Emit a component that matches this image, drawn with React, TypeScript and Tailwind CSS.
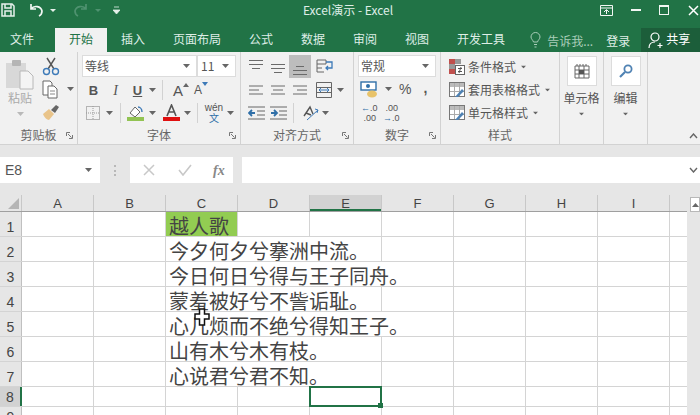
import type { ReactNode } from 'react'

const cjk = "font-['Noto_Sans_CJK_SC','Liberation_Sans',sans-serif]"
const cols = ['A', 'B', 'C', 'D', 'E', 'F', 'G', 'H', 'I', '']
// spans = how many gridlines the overflowing text in column C hides
const rows = [
  { text: '越人歌', spans: 0 },
  { text: '今夕何夕兮搴洲中流。', spans: 2 },
  { text: '今日何日兮得与王子同舟。', spans: 3 },
  { text: '蒙羞被好兮不訾诟耻。', spans: 2 },
  { text: '心几烦而不绝兮得知王子。', spans: 3 },
  { text: '山有木兮木有枝。', spans: 2 },
  { text: '心说君兮君不知。', spans: 2 },
  { text: '', spans: 0 },
  { text: '', spans: 0 },
]

function Caret({ className = '' }: { className?: string }) {
  return (
    <svg width="7" height="4" viewBox="0 0 7 4" className={`shrink-0 ${className}`}>
      <path d="M0 0h7L3.500 4z" fill="#666" />
    </svg>
  )
}

function Launcher({ className = '' }: { className?: string }) {
  return (
    <svg width="7" height="7" viewBox="0 0 7 7" className={`shrink-0 ${className}`}>
      <path d="M.5 4V.5H4M6.500 3v3.500H3M2 2l3.500 3.500" stroke="#777" fill="none" />
    </svg>
  )
}

function Lines({ kind }: { kind: 'left' | 'center' | 'right' | 'top' | 'mid' | 'bottom' }) {
  const paths: Record<string, string> = {
    left: 'M3 6h14M3 10h10M3 14h14',
    center: 'M3 6h14M5 10h10M3 14h14',
    right: 'M3 6h14M7 10h10M3 14h14',
    top: 'M3 3.500h14M3 7.500h14M6 11.500h8',
    mid: 'M3 7.500h14M3 11.500h14M6 15.500h8',
    bottom: 'M6 9.500h8M3 13.500h14M3 17.500h14',
  }
  return (
    <svg width="20" height="20" viewBox="0 0 20 20">
      <path d={paths[kind]} stroke="#6a6a6a" fill="none" />
    </svg>
  )
}

function Combo({ text, className }: { text: string; className: string }) {
  return (
    <div className={`flex h-[22px] items-center justify-between border border-[#dcdcdc] bg-white pl-0.5 pr-1.5 text-[12px] text-[#555] ${className}`}>
      <span>{text}</span>
      <Caret />
    </div>
  )
}

function Group({ width, label, launcher = true, children }: { width: number; label: string; launcher?: boolean; children: ReactNode }) {
  return (
    <div style={{ width }} className="flex h-full shrink-0 flex-col border-r border-[#d2d2d2]">
      <div className="h-[73px] min-h-0">{children}</div>
      <div className="relative flex h-[20px] items-center justify-center pt-[1px] text-[12px] text-[#666]">
        {label}
        {launcher && <Launcher className="absolute right-1 top-[8px]" />}
      </div>
    </div>
  )
}

function Clipboard() {
  return (
    <Group width={78} label="剪贴板">
      <div className="flex h-full">
        <div className="ml-[5px] flex w-[30px] flex-col items-center pt-[7px] text-[12px] leading-[14px] text-[#aaa]">
          <svg width="30" height="31" viewBox="0 0 30 31">
            <rect x="1" y="4" width="20" height="25" fill="#d8d8d8" />
            <rect x="7" y="1" width="9" height="6" rx="1" fill="#b5b5b5" />
            <path d="M15 12h8l5 5v13H15z" fill="#f4f4f4" stroke="#b8b8b8" />
          </svg>
          <span className="mt-[1px]">粘贴</span>
          <Caret className="mt-[7px] opacity-40" />
        </div>
        <div className="ml-[6px] flex flex-col gap-[3px] pt-[4px]">
          <svg width="20" height="20" viewBox="0 0 20 20">
            <path d="M6 2l7 11M14 2L7 13" stroke="#555" strokeWidth="1.400" fill="none" />
            <circle cx="5.500" cy="15.500" r="3" stroke="#3d7ab8" strokeWidth="1.400" fill="none" />
            <circle cx="14.500" cy="15.500" r="3" stroke="#3d7ab8" strokeWidth="1.400" fill="none" />
          </svg>
          <div className="flex items-center gap-[7px]">
            <svg width="19" height="20" viewBox="0 0 19 20">
              <path d="M2 2h7l2 2v12H2z" fill="#fff" stroke="#666" />
              <path d="M7 7h6l3 3v9H7z" fill="#fff" stroke="#666" />
              <path d="M9 12h5M9 15h5" stroke="#888" />
            </svg>
            <Caret />
          </div>
          <svg width="20" height="20" viewBox="0 0 20 20">
            <path d="M2 12l6-5 5 5-5 6c-2 0-5-3-6-6z" fill="#e9c48a" />
            <path d="M10 8l5-5 3 2-4 6z" fill="#666" />
          </svg>
        </div>
      </div>
    </Group>
  )
}

function Sep() {
  return <div className="h-[20px] w-px bg-[#d2d2d2]" />
}

function Font() {
  return (
    <Group width={163} label="字体">
      <div className="flex h-full flex-col pl-[4px]">
        <div className="mt-[3px] flex">
          <Combo text="等线" className="w-[115px]" />
          <Combo text="11" className="w-[39px] !pl-[3px]" />
        </div>
        <div className="mt-[2px] flex h-[23px] items-center text-[#555]">
          <span className="ml-[4px] w-[15px] text-center font-['Liberation_Sans'] text-[13px] font-bold">B</span>
          <span className="ml-[7px] w-[15px] text-center font-['Liberation_Serif'] text-[14px] italic">I</span>
          <span className="ml-[7px] w-[15px] text-center font-['Liberation_Sans'] text-[13px] font-bold underline">U</span>
          <Caret className="ml-[4px]" />
          <div className="ml-[6px]"><Sep /></div>
          <span className="ml-[10px] font-['Liberation_Sans'] text-[15px] leading-none">A</span>
          <svg width="6" height="4" viewBox="0 0 6 4" className="mb-[10px]"><path d="M0 4l3-4 3 4z" fill="#666" /></svg>
          <span className="ml-[5px] font-['Liberation_Sans'] text-[12px] leading-none">A</span>
          <svg width="6" height="4" viewBox="0 0 6 4" className="mb-[12px]"><path d="M0 0l3 4 3-4z" fill="#3d7ab8" /></svg>
        </div>
        <div className="flex h-[23px] items-center">
          <svg width="14" height="14" viewBox="0 0 14 14" className="ml-[4px]">
            <rect x=".5" y=".5" width="13" height="13" fill="none" stroke="#777" strokeDasharray="1 1" />
            <path d="M7 0v14M0 7h14" stroke="#999" strokeDasharray="1 1" />
          </svg>
          <Caret className="ml-[6px]" />
          <div className="ml-[7px]"><Sep /></div>
          <svg width="17" height="17" viewBox="0 0 17 17" className="ml-[6px]">
            <path d="M3 9l5-6 5 5-5 5z" fill="#fff" stroke="#666" />
            <path d="M11 3c2 0 4 2 4 5" stroke="#3d7ab8" strokeWidth="1.400" fill="none" />
            <rect y="13" width="17" height="4" fill="#92c353" />
          </svg>
          <Caret className="ml-[5px]" />
          <svg width="17" height="17" viewBox="0 0 17 17" className="ml-[7px]">
            <path d="M4 12L8.500 1 13 12M6 8h5" stroke="#555" strokeWidth="1.600" fill="none" />
            <rect y="13" width="17" height="4" fill="#e01010" />
          </svg>
          <Caret className="ml-[4px]" />
          <div className="ml-[6px]"><Sep /></div>
          <div className="ml-[6px] flex w-[20px] flex-col items-center text-[10px] leading-[10px] text-[#555]">
            <span className="font-['Liberation_Sans']">wén</span>
            <span className="text-[#2f6fa8]">文</span>
          </div>
          <Caret className="ml-[3px]" />
        </div>
      </div>
    </Group>
  )
}

function Align() {
  return (
    <Group width={113} label="对齐方式">
      <div className="flex h-full flex-col pl-[4px]">
        <div className="mt-[3px] flex h-[23px] items-center">
          <div className="flex w-[22px] justify-center"><Lines kind="top" /></div>
          <div className="flex w-[22px] justify-center"><Lines kind="mid" /></div>
          <div className="flex h-[23px] w-[22px] items-center justify-center bg-[#bdbdbd]"><Lines kind="bottom" /></div>
          <svg width="18" height="18" viewBox="0 0 18 18" className="ml-[5px]">
            <path d="M1 2h9v4H1zM1 6v4h5M1 10v4h7" stroke="#666" fill="none" />
            <path d="M10 4h6v6h-6M12 8l-2 2 2 2" stroke="#3d7ab8" strokeWidth="1.300" fill="none" />
          </svg>
        </div>
        <div className="flex h-[24px] items-center">
          <div className="flex w-[22px] justify-center"><Lines kind="left" /></div>
          <div className="flex w-[22px] justify-center"><Lines kind="center" /></div>
          <div className="flex w-[22px] justify-center"><Lines kind="right" /></div>
          <svg width="16" height="16" viewBox="0 0 16 16" className="ml-[5px]">
            <path d="M.5.5h15v15H.5zM.5 5.500h15M.5 10.500h15" stroke="#666" fill="none" />
            <path d="M3 8h10M5 6L3 8l2 2M11 6l2 2-2 2" stroke="#3d7ab8" fill="none" />
          </svg>
          <Caret className="ml-[5px]" />
        </div>
        <div className="flex h-[23px] items-center">
          <svg width="17" height="16" viewBox="0 0 17 16" className="ml-[3px]">
            <path d="M0 2h17M9 6h8M9 10h8M0 14h17" stroke="#666" fill="none" />
            <path d="M7 8H2M4 5L1 8l3 3" stroke="#2f6fa8" strokeWidth="1.800" fill="none" />
          </svg>
          <svg width="17" height="16" viewBox="0 0 17 16" className="ml-[5px]">
            <path d="M0 2h17M9 6h8M9 10h8M0 14h17" stroke="#666" fill="none" />
            <path d="M1 8h5M4 5l3 3-3 3" stroke="#2f6fa8" strokeWidth="1.800" fill="none" />
          </svg>
          <div className="ml-[6px]"><Sep /></div>
          <svg width="18" height="18" viewBox="0 0 18 18" className="ml-[8px]">
            <path d="M2 12L8 3l3 7M4 9l5 2" stroke="#555" strokeWidth="1.400" fill="none" />
            <path d="M5 16L16 6M13 5l3 1-1 3" stroke="#3d7ab8" fill="none" />
          </svg>
          <Caret className="ml-[2px]" />
        </div>
      </div>
    </Group>
  )
}

function NumberGroup() {
  return (
    <Group width={87} label="数字">
      <div className="flex h-full flex-col pl-[4px]">
        <div className="mt-[3px]"><Combo text="常规" className="w-[78px]" /></div>
        <div className="flex h-[24px] items-center text-[#555]">
          <svg width="20" height="20" viewBox="0 0 20 20" className="ml-[2px]">
            <rect x="1" y="3" width="15" height="8" fill="#fff" stroke="#2f6fa8" strokeWidth="1.400" />
            <circle cx="8" cy="7" r="2" fill="#2f6fa8" />
            <ellipse cx="12" cy="15" rx="5" ry="3.500" fill="#e8c36a" />
          </svg>
          <Caret className="ml-[5px]" />
          <span className="ml-[7px] font-['Liberation_Sans'] text-[14px] leading-none">%</span>
          <span className="mb-[3px] ml-[12px] font-['Liberation_Sans'] text-[14px] font-bold leading-none">,</span>
        </div>
        <div className="flex h-[23px] items-center font-['Liberation_Sans'] text-[9px] leading-[10px] text-[#555]">
          <div className="ml-[3px] w-[15px] whitespace-nowrap text-right"><span className="text-[#2f6fa8]">←</span>.0<br />.00</div>
          <div className="ml-[7px] w-[15px] whitespace-nowrap text-right">.00<br /><span className="text-[#2f6fa8]">→</span>.0</div>
        </div>
      </div>
    </Group>
  )
}

function StyleRow({ text, cond }: { text: string; cond?: boolean }) {
  return (
    <div className="flex h-[23px] items-center text-[12px] text-[#555]">
      {cond ? (
        <svg width="16" height="16" viewBox="0 0 16 16" className="mr-[3px]">
          <rect x="0" y="0" width="6" height="5" fill="#c0504d" />
          <rect x="6" y="0" width="6" height="5" fill="#999" />
          <rect x="0" y="5" width="6" height="5" fill="#999" />
          <rect x="0" y="10" width="6" height="5" fill="#c0504d" />
          <rect x="6.500" y="6.500" width="9" height="9" fill="#fff" stroke="#666" />
          <path d="M9 9.500h4M9 12.500h4M12 8l-2 6" stroke="#555" fill="none" />
        </svg>
      ) : (
        <svg width="16" height="16" viewBox="0 0 16 16" className="mr-[3px]">
          <rect x=".5" y=".5" width="15" height="14" fill="#fff" stroke="#777" />
          <rect x="1" y="1" width="14" height="4" fill="#bbb" />
          <path d="M1 9.500h14M5.500 1v13M10.500 1v13" stroke="#aaa" />
          <path d="M6 15l7-8 2 2-6 6z" fill="#4f82b3" />
        </svg>
      )}
      <span>{text}</span>
      <Caret className="ml-[4px] scale-75" />
    </div>
  )
}

function Styles() {
  return (
    <Group width={119} label="样式" launcher={false}>
      <div className="flex h-full flex-col pl-[8px] pt-[3px]">
        <StyleRow text="条件格式" cond />
        <StyleRow text="套用表格格式" />
        <StyleRow text="单元格样式" />
      </div>
    </Group>
  )
}

function BigButton({ label, width, children }: { label: string; width: number; children: ReactNode }) {
  return (
    <Group width={width} label="" launcher={false}>
      <div className="flex h-full flex-col items-center pt-[4px] text-[12px] leading-[16px] text-[#555]">
        <div className="flex h-[30px] w-[30px] items-center justify-center border border-[#dcdcdc] bg-white">{children}</div>
        <span className="mt-[4px]">{label}</span>
        <Caret className="mt-[6px] scale-75" />
      </div>
    </Group>
  )
}

function Ribbon() {
  return (
    <div className={`relative flex h-[93px] border-b border-[#d2d2d2] bg-[#f1f1f1] ${cjk}`}>
      <Clipboard />
      <Font />
      <Align />
      <NumberGroup />
      <Styles />
      <BigButton label="单元格" width={44}>
        <svg width="16" height="16" viewBox="0 0 16 16">
          <path d="M1 3h14v12H1zM1 7h14M1 11h14M5 3v12M10 3v12M3 1v2M6 1v2M9 1v2M12 1v2" stroke="#666" fill="none" />
          <rect x="5" y="7" width="5" height="4" fill="#555" />
        </svg>
      </BigButton>
      <BigButton label="编辑" width={44}>
        <svg width="16" height="16" viewBox="0 0 16 16">
          <circle cx="10" cy="6" r="3.600" stroke="#4f82b3" strokeWidth="1.800" fill="none" />
          <path d="M7 9l-5 5" stroke="#4f82b3" strokeWidth="2.200" />
        </svg>
      </BigButton>
      <svg width="9" height="6" viewBox="0 0 9 6" className="absolute bottom-[5px] right-[2px]">
        <path d="M1 5l3.500-4L8 5" stroke="#666" strokeWidth="1.400" fill="none" />
      </svg>
    </div>
  )
}

function TitleBar() {
  return (
    <div className="flex h-[26px] items-center bg-[#217346] pb-[6px] text-[#dfeee6]">
      <svg width="14" height="14" viewBox="0 0 14 14" className="ml-[1px]">
        <path d="M1 1h10l2 2v10H1z" fill="none" stroke="#e6f1eb" strokeWidth="1.500" />
        <path d="M4 1v4h6V1M4 13V8h6v5" fill="none" stroke="#e6f1eb" strokeWidth="1.500" />
      </svg>
      <svg width="16" height="14" viewBox="0 0 16 14" className="ml-[14px]">
        <path d="M2 1v5h5M2 6c3-4 10-3 11 2 0 2-1 4-3 5" fill="none" stroke="#f2f7f4" strokeWidth="1.700" />
      </svg>
      <svg width="6" height="3" viewBox="0 0 6 3" className="ml-[5px]"><path d="M0 0h6L3 3z" fill="#e6f1eb" /></svg>
      <svg width="16" height="14" viewBox="0 0 16 14" className="ml-[16px]">
        <path d="M14 1v5H9M14 6C11 2 4 3 3 8c0 2 1 4 3 5" fill="none" stroke="#4f9270" strokeWidth="1.700" />
      </svg>
      <svg width="6" height="3" viewBox="0 0 6 3" className="ml-[7px]"><path d="M0 0h6L3 3z" fill="#4f9270" /></svg>
      <svg width="7" height="8" viewBox="0 0 7 8" className="ml-[12px]"><path d="M1 1h5M0 4h7L3.500 8z" fill="#e6f1eb" stroke="#e6f1eb" strokeWidth=".8" /></svg>
      <div className={`flex-1 pr-[24px] text-center text-[12px] ${cjk}`}>Excel演示 - Excel</div>
      <svg width="13" height="11" viewBox="0 0 13 11" className="mr-[18px]">
        <path d="M.5.5h12v10H.5zM.5 3h12M4 7l2.500-2.500L9 7M6.500 5v4" fill="none" stroke="#f2f7f4" />
      </svg>
      <div className="mr-[18px] h-[2px] w-[10px] bg-[#f2f7f4]" />
      <div className="mr-[19px] h-[10px] w-[10px] border border-t-2 border-[#f2f7f4]" />
      <svg width="11" height="11" viewBox="0 0 11 11" className="mr-[1px]">
        <path d="M1 1l9 9M10 1l-9 9" stroke="#fff" strokeWidth="1.500" />
      </svg>
    </div>
  )
}

function TabBar() {
  const tabs = ['开始', '插入', '页面布局', '公式', '数据', '审阅', '视图', '开发工具']
  return (
    <div className={`flex h-[26px] items-end bg-[#217346] text-[12px] leading-[22px] text-[#dfeee6] ${cjk}`}>
      <div className="h-[24px] w-[55px] pl-[10px]">文件</div>
      {tabs.map((tab, i) => (
        <div key={tab} className={`h-[24px] px-[14px] ${i === 0 ? 'bg-[#f1f1f1] text-[#217346]' : ''}`}>
          {tab}
        </div>
      ))}
      <svg width="11" height="16" viewBox="0 0 11 16" className="mb-[4px] ml-[11px]">
        <path d="M3.500 10C3 8 1 7 1 5a4.500 4.500 0 019 0c0 2-2 3-2.500 5zM4 12.500h3M4.500 15h2" fill="none" stroke="#a9cdb9" />
      </svg>
      <div className="ml-[6px] w-[58px] text-[#a9cdb9]">告诉我...</div>
      <div className="ml-[1px] w-[34px]">登录</div>
      <div className="ml-[1px] flex h-[24px] flex-1 items-center bg-[#1c5e3a] pl-[7px] text-white">
        <svg width="17" height="17" viewBox="0 0 17 17" className="mr-[1px]">
          <circle cx="7" cy="5" r="4" fill="none" stroke="#fff" strokeWidth="1.200" />
          <path d="M1 16c0-4 2-6 6-6M12 11v5M9.500 13.500h5" fill="none" stroke="#fff" strokeWidth="1.200" />
        </svg>
        <span className="-mt-[2px]">共享</span>
      </div>
    </div>
  )
}

function FormulaBar() {
  return (
    <div className="flex h-[50px] items-start bg-[#e6e6e6] pt-[12px]">
      <div className="flex h-[26px] w-[100px] items-center justify-between bg-white pl-[5px] pr-[8px] font-['Liberation_Sans'] text-[14px] text-[#555]">
        E8
        <Caret />
      </div>
      <div className="ml-[14px] mt-[8px] flex h-[11px] w-[2px] flex-col justify-between">
        <div className="h-[2px] bg-[#b8b8b8]" />
        <div className="h-[2px] bg-[#b8b8b8]" />
        <div className="h-[2px] bg-[#b8b8b8]" />
      </div>
      <div className="ml-[14px] flex h-[26px] w-[103px] items-center bg-white">
        <svg width="12" height="12" viewBox="0 0 12 12" className="ml-[13px]">
          <path d="M1 1l10 10M11 1L1 11" stroke="#c8c8c8" strokeWidth="1.500" />
        </svg>
        <svg width="14" height="12" viewBox="0 0 14 12" className="ml-[23px]">
          <path d="M1 6l4 5 8-10" stroke="#c8c8c8" strokeWidth="1.600" fill="none" />
        </svg>
        <span className="ml-[21px] font-['Liberation_Serif'] text-[14px] font-bold italic text-[#888]">fx</span>
      </div>
      <div className="ml-[9px] flex h-[26px] flex-1 items-center justify-end bg-white pr-[2px]">
        <svg width="9" height="6" viewBox="0 0 9 6">
          <path d="M1 1l3.500 4L8 1" stroke="#666" strokeWidth="1.400" fill="none" />
        </svg>
      </div>
    </div>
  )
}

function Sheet() {
  return (
    <div className="flex h-[220px] overflow-hidden bg-[#e6e6e6]">
      <div className="w-[687px] shrink-0 bg-white">
        <div className="flex h-[17px] border-b border-[#9f9f9f] bg-[#e6e6e6]">
          <div className="flex w-[22px] shrink-0 items-end justify-end border-r border-[#c8c8c8] pb-[2px] pr-[2px]">
            <svg width="11" height="11" viewBox="0 0 11 11"><path d="M11 0v11H0z" fill="#b5b5b5" /></svg>
          </div>
          {cols.map((c, i) => (
            <div
              key={i}
              className={`flex shrink-0 items-center justify-center border-r font-['Liberation_Sans'] text-[13px] leading-none text-[#444] ${
                c === '' ? 'w-[17px] border-transparent' : 'w-[72px] border-[#c8c8c8]'
              } ${c === 'E' ? 'bg-[#d2d2d2] shadow-[inset_0_-2px_0_#217346]' : ''}`}
            >
              {c}
            </div>
          ))}
        </div>
        {rows.map((row, i) => (
          <div key={i} className={`flex border-b border-[#d4d4d4] ${i < 7 ? 'h-[25px]' : 'h-[20px]'}`}>
            <div
              className={`flex w-[22px] shrink-0 items-end justify-center border-r font-['Liberation_Sans'] text-[14px] leading-[17px] text-[#444] ${
                i === 7 ? 'border-r-2 border-[#217346] bg-[#d2d2d2]' : 'border-[#c0c0c0] bg-[#e6e6e6]'
              }`}
            >
              {i + 1}
            </div>
            {cols.map((c, j) => {
              const hidden = j >= 2 && j < 2 + row.spans
              return (
                <div
                  key={j}
                  className={`relative shrink-0 border-r ${c === '' ? 'w-[17px] border-transparent' : 'w-[72px]'} ${
                    hidden ? 'border-transparent' : 'border-[#d4d4d4]'
                  } ${i === 0 && c === 'C' ? 'bg-[#92cc52]' : ''}`}
                >
                  {c === 'C' && row.text && (
                    <span className={`absolute left-[3px] top-[1px] z-10 whitespace-nowrap text-[20px] leading-[25px] text-[#444] ${cjk}`}>
                      {row.text}
                    </span>
                  )}
                  {c === 'E' && i === 7 && (
                    <div className="absolute inset-[-1px] z-20 border-2 border-[#217346]">
                      <div className="absolute bottom-[-3px] right-[-3px] h-[5px] w-[5px] bg-[#217346]" />
                    </div>
                  )}
                </div>
              )
            })}
          </div>
        ))}
      </div>
      <div className="ml-[3px] mt-[2px] flex h-[15px] w-[10px] items-center justify-center border border-[#b8b8b8] bg-white">
        <svg width="7" height="4" viewBox="0 0 7 4"><path d="M0 4l3.500-4L7 4z" fill="#666" /></svg>
      </div>
    </div>
  )
}

export default function App() {
  return (
    <div className="relative h-[415px] w-[700px] overflow-hidden bg-white">
      <TitleBar />
      <TabBar />
      <Ribbon />
      <FormulaBar />
      <Sheet />
      <svg width="16" height="18" viewBox="0 0 16 18" className="absolute left-[194px] top-[308px] z-30">
        <path d="M5.500 1h5v5h4.500v5h-4.500v6h-5v-6H1V6h4.500z" fill="#fff" stroke="#111" strokeWidth="1.500" />
      </svg>
    </div>
  )
}
